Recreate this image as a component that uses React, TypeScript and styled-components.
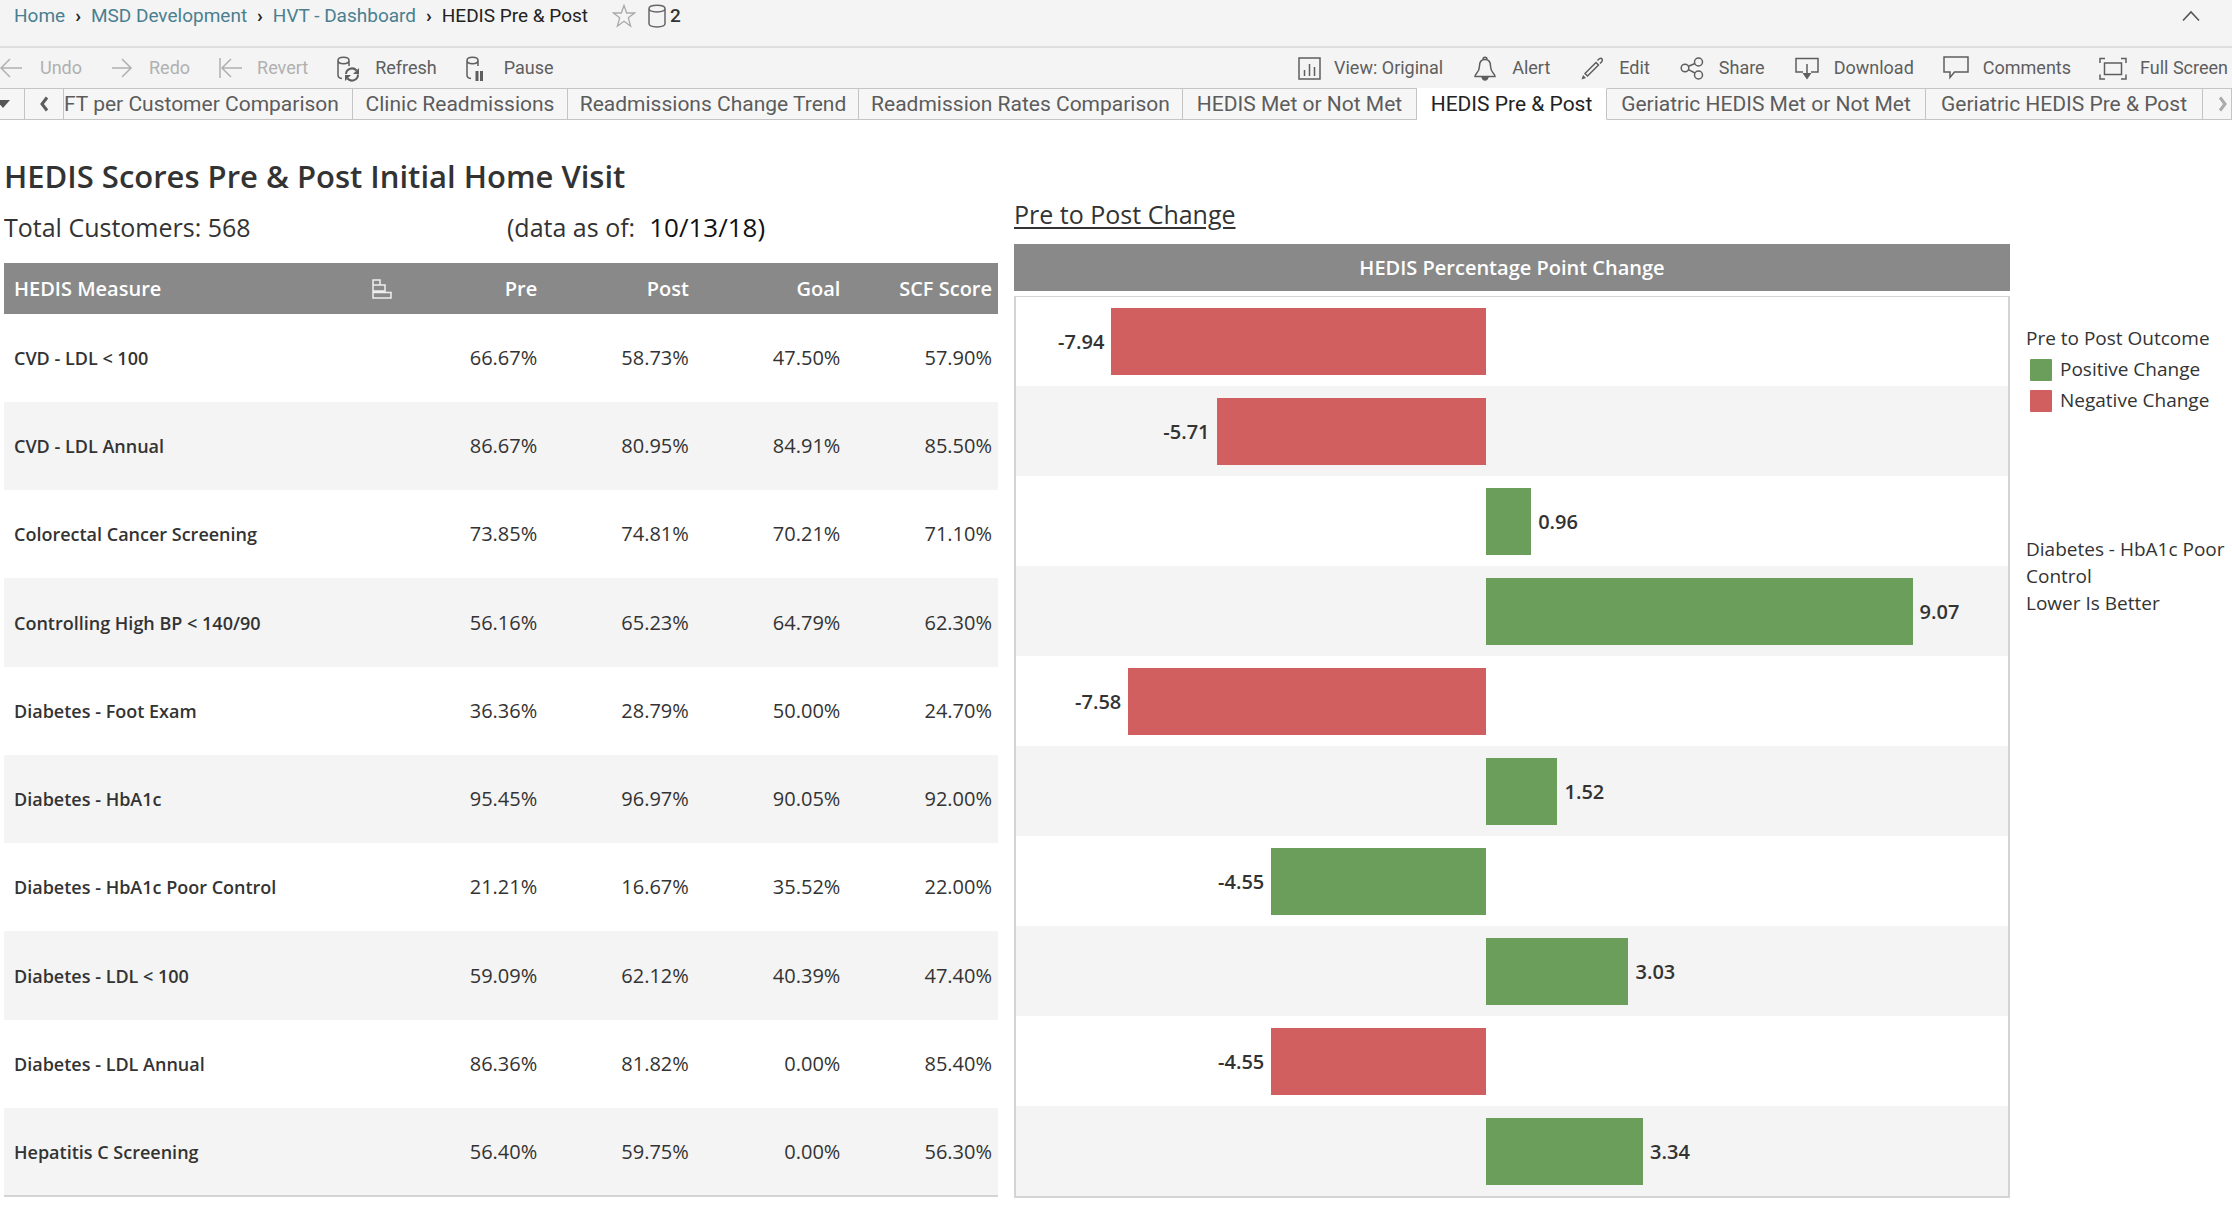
import React from "react";
import styled, { createGlobalStyle } from "styled-components";

const sans = `"Open Sans", "Noto Sans", sans-serif`;
const chrome = `Roboto, "Liberation Sans", sans-serif`;

const GlobalStyle = createGlobalStyle`
  *, *::before, *::after { box-sizing: border-box; }
  body { margin: 0; background: #fff; color: #333; font-family: ${sans}; }
  button { border: 0; margin: 0; padding: 0; background: none; color: inherit; font: inherit; cursor: pointer; }
  svg { display: block; flex: none; fill: none; stroke: currentColor; }
`;

const TopBar = styled.header`
  display: flex;
  align-items: center;
  justify-content: space-between;
  height: 48px;
  padding: 0 32px 14px 14px;
  background: #f4f4f4;
  border-bottom: 2px solid #dedede;
  font-family: ${chrome};
  font-size: 19px;
  line-height: 24px;
`;

const TopGroup = styled.div`
  display: flex;
  align-items: center;
  gap: 12px;
`;

const Crumbs = styled.nav`
  display: flex;
  align-items: center;
  gap: 10px;
  margin-right: 12px;
  color: #222;
`;

const CrumbLink = styled.a`
  color: #4a7f90;
  text-decoration: none;
`;

const CrumbMark = styled.span`
  font-weight: 700;
`;

const SourceButton = styled.button`
  display: flex;
  align-items: center;
  gap: 4px;
  color: #333;
  font-weight: 500;
  svg { color: #666; }
`;

const PlainButton = styled.button<{ $color: string }>`
  color: ${(p) => p.$color};
`;

const Toolbar = styled.div`
  display: flex;
  justify-content: space-between;
  height: 40px;
  padding-right: 4px;
  background: #f4f4f4;
  font-family: ${chrome};
  font-size: 18px;
  line-height: 24px;
`;

const ToolGroup = styled.div<{ $gap: number }>`
  display: flex;
  align-items: center;
  gap: ${(p) => p.$gap}px;
`;

const Tool = styled.button<{ $muted?: boolean }>`
  display: flex;
  align-items: center;
  gap: 13px;
  color: ${(p) => (p.$muted ? "#b0b0b0" : "#5e5e5e")};
  white-space: nowrap;
`;

const TabStrip = styled.div`
  display: grid;
  grid-template-columns: 25fr 39fr 289fr 215fr 291fr 324fr 234fr 190fr 319fr 277fr 29fr;
  height: 32px;
  font-family: ${chrome};
  font-size: 21px;
  line-height: 28px;
  color: #5c5c5c;
`;

const Tab = styled.button<{ $active?: boolean; $clipped?: boolean }>`
  min-width: 0;
  overflow: hidden;
  white-space: nowrap;
  text-align: ${(p) => (p.$clipped ? "left" : "center")};
  color: ${(p) => (p.$active ? "#222" : "inherit")};
  background: ${(p) => (p.$active ? "#fff" : "#f6f6f6")};
  border-top: 1px solid ${(p) => (p.$active ? "#fff" : "#c4c4c4")};
  border-bottom: 1px solid ${(p) => (p.$active ? "#fff" : "#c4c4c4")};
  border-right: 1px solid #c4c4c4;
  svg { margin: 0 auto; }
`;

const Dashboard = styled.main`
  display: grid;
  grid-template-columns: 994fr 996fr 208fr;
  padding-left: 4px;
`;

const ScorePanel = styled.section`
  padding-top: 36px;
`;

const Title = styled.h1`
  margin: 0 0 13px;
  font-size: 31px;
  font-weight: 600;
  line-height: 40px;
`;

const Facts = styled.div`
  display: grid;
  grid-template-columns: 503fr 491fr;
  margin-bottom: 18px;
  font-size: 25px;
  line-height: 36px;
`;

const Fact = styled.p`
  display: flex;
  gap: 14px;
  margin: 0;
  time { color: #111; font-size: 26px; }
`;

const ScoreTable = styled.table`
  width: 100%;
  border-collapse: collapse;
  table-layout: fixed;
  border-bottom: 2px solid #d4d4d4;
  font-size: 20px;
  line-height: 28px;

  thead tr { height: 51px; background: #898989; color: #fff; }
  tbody tr { height: 88px; }
  tbody tr:nth-child(even) { background: #f4f4f4; }
  tbody tr:nth-child(4n) { height: 89px; }
  th, td { padding: 0 6px 0 10px; text-align: right; }
  th:first-child { width: 39%; padding-right: 0; text-align: left; }
  th { font-weight: 600; }
  tbody th { font-size: 18px; }
`;

const MeasureHead = styled.div`
  display: flex;
  align-items: center;
  justify-content: space-between;
`;

const ChartPanel = styled.section`
  padding-top: 76px;
`;

const ChartTitle = styled.h2`
  margin: 0 0 12px;
  font-size: 25px;
  font-weight: 400;
  line-height: 36px;
  text-decoration: underline;
  text-decoration-thickness: 2px;
  text-underline-offset: 3px;
`;

const ChartHead = styled.h3`
  margin: 0 0 5px;
  background: #898989;
  color: #fff;
  font-size: 20px;
  font-weight: 600;
  line-height: 47px;
  text-align: center;
`;

const Plot = styled.div`
  border: 2px solid #d4d4d4;
  border-top-width: 1px;
`;

const PlotRow = styled.div`
  display: grid;
  grid-template-columns: 470fr 522fr;
  height: 90px;
  &:first-child { height: 89px; }
  &:nth-child(even) { background: #f4f4f4; }
`;

const Side = styled.div<{ $negative: boolean }>`
  display: flex;
  flex-direction: ${(p) => (p.$negative ? "row-reverse" : "row")};
  grid-column: ${(p) => (p.$negative ? 1 : 2)};
  align-items: center;
  gap: 7px;
  font-size: 20px;
  font-weight: 600;
`;

const Bar = styled.div<{ $good: boolean }>`
  height: 67px;
  background: ${(p) => (p.$good ? "#6b9e5a" : "#d15f5f")};
`;

const Notes = styled.aside`
  padding-top: 205px;
  font-size: 19px;
  line-height: 27px;
`;

const LegendTitle = styled.h2`
  margin: 0 0 2px;
  font-size: 19px;
  font-weight: 400;
`;

const Legend = styled.ul`
  margin: 0 0 120px;
  padding: 0 0 0 4px;
  list-style: none;
  line-height: 31px;
`;

const LegendItem = styled.li<{ $good: boolean }>`
  display: flex;
  align-items: center;
  gap: 8px;
  &::before {
    content: "";
    width: 22px;
    height: 22px;
    border-radius: 1px;
    background: ${(p) => (p.$good ? "#6b9e5a" : "#d15f5f")};
  }
`;

const Note = styled.p`
  margin: 0;
`;

const Columns = styled(Dashboard)`
  column-gap: 16px;
  grid-template-columns: 994fr 996fr 206fr;
`;

type IconProps = { w?: number; vx?: number; children: React.ReactNode };
const Icon = ({ w = 28, vx = 0, children }: IconProps) => (
  <svg width={w} height="28" viewBox={`${vx} 0 ${w} 28`} strokeWidth="1.5" aria-hidden="true">
    {children}
  </svg>
);

const cylinder = "M4 6.5V21q0 3 4 3.600M4 6.500C4 2.200 15 2.200 15 6.500C15 10.800 4 10.800 4 6.500M15 6.500V12";

const leftTools = [
  { label: "Undo", muted: true, icon: <Icon w={27} vx={3}><path d="M4 14H25M13 5l-9 9 9 9" /></Icon> },
  { label: "Redo", muted: true, icon: <Icon><path d="M4 14H23M14 5l9 9-9 9" /></Icon> },
  { label: "Revert", muted: true, icon: <Icon><path d="M4 4V24M6 14H26M15 5l-9 9 9 9" /></Icon> },
  {
    label: "Refresh",
    icon: (
      <Icon>
        <path d={cylinder} />
        <g strokeWidth="2"><path d="M12 20a6 6 0 0 1 10.500-3.500M24 20.500a6 6 0 0 1-10.500 4" /></g>
        <path d="M25 14v6h-6zM11 27v-6h6z" fill="currentColor" stroke="none" />
      </Icon>
    ),
  },
  {
    label: "Pause",
    icon: <Icon><path d={cylinder} /><path d="M14 17V27M18.500 17V27" strokeWidth="3" /></Icon>,
  },
];

const rightTools = [
  { label: "View: Original", icon: <Icon w={23} vx={3}><path d="M4 4H25V25H4zM9.500 16v6M14.500 10v12M19.500 13v9" /></Icon> },
  {
    label: "Alert",
    icon: (
      <Icon>
        <path d="M4 22.500C4 19 8.500 19 8.500 12C8.500 8 10.500 5.500 14 5.500S19.500 8 19.500 12C19.500 19 24 19 24 22.500z" />
        <path d="M12 5.500C12 2.500 16 2.500 16 5.500" />
        <path d="M11 23H17Q16 26 14 26T11 23" fill="currentColor" />
      </Icon>
    ),
  },
  {
    label: "Edit",
    icon: (
      <Icon>
        <path d="M7 19.500L18 8.500L20.500 11L9.500 22zM19.500 6.500L21 5Q23 3.500 24 5T23.500 8L22 9.500" />
        <path d="M3.500 25.500l1.500-4.500 3 3z" fill="currentColor" stroke="none" />
      </Icon>
    ),
  },
  {
    label: "Share",
    icon: (
      <Icon>
        <circle cx="7" cy="14" r="3.800" /><circle cx="20.500" cy="8" r="4" /><circle cx="20.500" cy="21" r="4" />
        <path d="M10.500 12.300L17 9.500M10.500 15.700L17 19" />
      </Icon>
    ),
  },
  {
    label: "Download",
    icon: <Icon><path d="M10 18H3V4.500H25V18H18M14 10V21" /><path d="M9.500 19H18.500L14 25.500z" fill="currentColor" stroke="none" /></Icon>,
  },
  { label: "Comments", icon: <Icon><path d="M2 3H26V18H12.500L8 23.500V18H2z" /></Icon> },
  {
    label: "Full Screen",
    icon: <Icon><path d="M5.500 9H22.500V20.500H5.500zM1 9V4.500H6M22 4.500H27V9M27 20.500V25H22M6 25H1V20.500" /></Icon>,
  },
];

const tabs = [
  "FT per Customer Comparison",
  "Clinic Readmissions",
  "Readmissions Change Trend",
  "Readmission Rates Comparison",
  "HEDIS Met or Not Met",
  "HEDIS Pre & Post",
  "Geriatric HEDIS Met or Not Met",
  "Geriatric HEDIS Pre & Post",
];

const measures = [
  { name: "CVD - LDL < 100", scores: ["66.67%", "58.73%", "47.50%", "57.90%"], change: -7.94, good: false },
  { name: "CVD - LDL Annual", scores: ["86.67%", "80.95%", "84.91%", "85.50%"], change: -5.71, good: false },
  { name: "Colorectal Cancer Screening", scores: ["73.85%", "74.81%", "70.21%", "71.10%"], change: 0.96, good: true },
  { name: "Controlling High BP < 140/90", scores: ["56.16%", "65.23%", "64.79%", "62.30%"], change: 9.07, good: true },
  { name: "Diabetes - Foot Exam", scores: ["36.36%", "28.79%", "50.00%", "24.70%"], change: -7.58, good: false },
  { name: "Diabetes - HbA1c", scores: ["95.45%", "96.97%", "90.05%", "92.00%"], change: 1.52, good: true },
  { name: "Diabetes - HbA1c Poor Control", scores: ["21.21%", "16.67%", "35.52%", "22.00%"], change: -4.55, good: true },
  { name: "Diabetes - LDL < 100", scores: ["59.09%", "62.12%", "40.39%", "47.40%"], change: 3.03, good: true },
  { name: "Diabetes - LDL Annual", scores: ["86.36%", "81.82%", "0.00%", "85.40%"], change: -4.55, good: false },
  { name: "Hepatitis C Screening", scores: ["56.40%", "59.75%", "0.00%", "56.30%"], change: 3.34, good: true },
];

// Extent of the axis on each side of zero, in percentage points.
const AXIS_MIN = 9.96;
const AXIS_MAX = 11.1;

const ChangeRow = ({ change, good }: { change: number; good: boolean }) => {
  const negative = change < 0;
  const share = (Math.abs(change) / (negative ? AXIS_MIN : AXIS_MAX)) * 100;
  return (
    <PlotRow>
      <Side $negative={negative}>
        <Bar $good={good} style={{ width: `${share}%` }} />
        <span>{change.toFixed(2)}</span>
      </Side>
    </PlotRow>
  );
};

export default function App() {
  return (
    <>
      <GlobalStyle />
      <TopBar>
        <TopGroup>
          <Crumbs aria-label="Breadcrumb">
            <CrumbLink href="#home">Home</CrumbLink>
            <CrumbMark>›</CrumbMark>
            <CrumbLink href="#msd">MSD Development</CrumbLink>
            <CrumbMark>›</CrumbMark>
            <CrumbLink href="#hvt">HVT - Dashboard</CrumbLink>
            <CrumbMark>›</CrumbMark>
            <span>HEDIS Pre &amp; Post</span>
          </Crumbs>
          <PlainButton $color="#aaa" aria-label="Favorite">
            <svg width="24" height="24" viewBox="0 0 24 24" strokeWidth="1.300">
              <path d="M12 1.500L14.700 9H22.500L16.300 13.800L18.600 22L12 17.200L5.400 22L7.700 13.800L1.500 9H9.300z" />
            </svg>
          </PlainButton>
          <SourceButton aria-label="Data sources: 2">
            <svg width="18" height="24" viewBox="0 0 18 24" strokeWidth="1.500">
              <path d="M1 4.500V19.500C1 24 17 24 17 19.500V4.500C17 0 1 0 1 4.500C1 9 17 9 17 4.500" />
            </svg>
            2
          </SourceButton>
        </TopGroup>
        <PlainButton $color="#555" aria-label="Collapse header">
          <svg width="18" height="12" viewBox="0 0 18 12" strokeWidth="1.600">
            <path d="M1 10.500L9 2L17 10.500" />
          </svg>
        </PlainButton>
      </TopBar>

      <Toolbar>
        <ToolGroup $gap={26}>
          {leftTools.map((t) => (
            <Tool key={t.label} $muted={t.muted}>{t.icon}{t.label}</Tool>
          ))}
        </ToolGroup>
        <ToolGroup $gap={28}>
          {rightTools.map((t) => (
            <Tool key={t.label}>{t.icon}{t.label}</Tool>
          ))}
        </ToolGroup>
      </Toolbar>

      <TabStrip>
        <Tab aria-label="All sheets">
          <svg width="24" height="8" viewBox="0 0 24 8"><path d="M-4 0H10L3 8z" fill="#555" stroke="none" /></svg>
        </Tab>
        <Tab aria-label="Previous sheets">
          <svg width="12" height="16" viewBox="0 0 12 16" strokeWidth="3"><path d="M9 1.500L4 8L9 14.500" /></svg>
        </Tab>
        {tabs.map((name, i) => (
          <Tab key={name} $active={name === "HEDIS Pre & Post"} $clipped={i === 0}>{name}</Tab>
        ))}
        <Tab aria-label="Next sheets">
          <svg width="24" height="16" viewBox="0 0 24 16" strokeWidth="3" color="#aaa"><path d="M15 1.500L20 8L15 14.500" /></svg>
        </Tab>
      </TabStrip>

      <Columns>
        <ScorePanel>
          <Title>HEDIS Scores Pre &amp; Post Initial Home Visit</Title>
          <Facts>
            <Fact>Total Customers: 568</Fact>
            <Fact>(data as of: <time dateTime="2018-10-13">10/13/18)</time></Fact>
          </Facts>
          <ScoreTable>
            <thead>
              <tr>
                <th scope="col">
                  <MeasureHead>
                    HEDIS Measure
                    <PlainButton $color="#eee" aria-label="Sort by measure">
                      <svg width="20" height="20" viewBox="0 0 20 20" strokeWidth="1.500">
                        <path d="M1 1H8V6H1zM1 6H13V12H1zM1 13.500H19V19H1zM1 12V14" />
                      </svg>
                    </PlainButton>
                  </MeasureHead>
                </th>
                <th scope="col">Pre</th>
                <th scope="col">Post</th>
                <th scope="col">Goal</th>
                <th scope="col">SCF Score</th>
              </tr>
            </thead>
            <tbody>
              {measures.map((m) => (
                <tr key={m.name}>
                  <th scope="row">{m.name}</th>
                  {m.scores.map((s, i) => <td key={i}>{s}</td>)}
                </tr>
              ))}
            </tbody>
          </ScoreTable>
        </ScorePanel>

        <ChartPanel>
          <ChartTitle>Pre to Post Change</ChartTitle>
          <ChartHead>HEDIS Percentage Point Change</ChartHead>
          <Plot>
            {measures.map((m) => <ChangeRow key={m.name} change={m.change} good={m.good} />)}
          </Plot>
        </ChartPanel>

        <Notes>
          <LegendTitle>Pre to Post Outcome</LegendTitle>
          <Legend>
            <LegendItem $good>Positive Change</LegendItem>
            <LegendItem $good={false}>Negative Change</LegendItem>
          </Legend>
          <Note>Diabetes - HbA1c Poor Control<br />Lower Is Better</Note>
        </Notes>
      </Columns>
    </>
  );
}
